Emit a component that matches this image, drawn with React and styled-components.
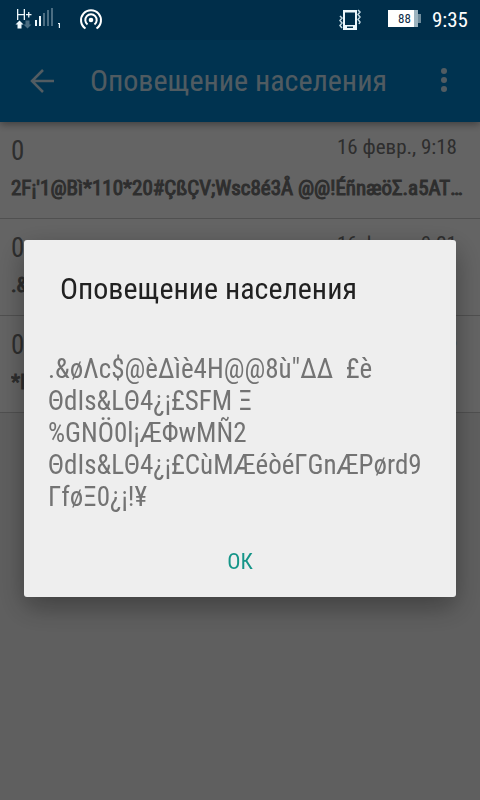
import React from "react";
import styled, { createGlobalStyle } from "styled-components";

const messages = [
  { id: 1, sender: "0", date: "16 февр., 9:18", text: "2F¡'1@Bì*110*20#ÇßÇV;Wsc8é3Å @@!ÉñnæöΣ.a5ATΔΔ £è" },
  { id: 2, sender: "0", date: "16 февр., 9:21", text: ".&øΛc$@èΔìè4H@@8ù\"ΔΔ  £è ΘdΙs&LΘ4¿¡£SFM Ξ %GNÖ0l¡ÆΦwMÑ2" },
  { id: 3, sender: "0", date: "16 февр., 9:25", text: "*ΙΘdΙs&LΘ4¿¡£CùMÆéòéΓGnÆPørd9 ΓføΞ0¿¡!¥ ΘdΙs&LΘ4" },
];

const alertLines = [
  ".&øΛc$@èΔìè4H@@8ù\"ΔΔ  £è",
  "ΘdIs&LΘ4¿¡£SFM Ξ",
  "%GNÖ0l¡ÆΦwMÑ2",
  "ΘdIs&LΘ4¿¡£CùMÆéòéΓGnÆPørd9",
  "ΓføΞ0¿¡!¥",
];

function SignalIcon() {
  return (
    <svg width="46" height="24" viewBox="0 0 46 24" fill="#eef7fb" aria-hidden="true">
      <path d="M1 1h1.300v5h5.400v-5h1.300v11h-1.300v-4.800h-5.400v4.800h-1.300z" />
      <path d="M10 6h5.500v1.300h-5.500zM12.100 4h1.300v5.500h-1.300z" />
      <path d="M3.500 12.500l4 4h-2v4h-4v-4h-2z" />
      <path d="M11.500 20.500l-4-4h2v-4h4v4h2z" fill="#4b6d82" />
      <path d="M19 12h2v6h-2zM23 8h2v10h-2z" />
      <path d="M27 5h2v13h-2zM31 2h2v16h-2zM35 0h2v18h-2z" fill="#4b6d82" />
      <path d="M42 15h2v5h-1.200v-4h-0.800z" />
    </svg>
  );
}

function HotspotIcon() {
  return (
    <svg width="24" height="24" viewBox="0 0 24 24" fill="none" stroke="#fff" strokeWidth="2" aria-hidden="true">
      <circle cx="12" cy="12" r="2.300" fill="#fff" stroke="none" />
      <path d="M8.500 16.500a5.700 5.700 0 1 1 7 0" />
      <path d="M6.500 20.500a10 10 0 1 1 11 0" />
    </svg>
  );
}

function VibrateIcon() {
  return (
    <svg width="24" height="24" viewBox="0 0 24 24" fill="none" aria-hidden="true">
      <path fillRule="evenodd" fill="#eef7fb" d="M5 2h14v20h-14zM7 4.500v12.500h10v-12.500zM9 18.500v1.500h6v-1.500z" />
      <path d="M2 8l2 2-2 2.500 2 2.500-2 2.500 2 2.500M20 2l2 2-2 2.500 2 2.500-2 2.500 2 2.500-1 2" stroke="#c5dae4" strokeWidth="1.500" />
    </svg>
  );
}

function BackIcon() {
  return (
    <svg width="24" height="24" viewBox="0 0 24 24" fill="none" stroke="#fff" strokeWidth="2.500" aria-hidden="true">
      <path d="M13 1L2 12l11 11M2 12H24" />
    </svg>
  );
}

function MoreIcon() {
  return (
    <svg width="6" height="26" viewBox="0 0 6 26" fill="#fff" aria-hidden="true">
      <circle cx="3" cy="3" r="3" />
      <circle cx="3" cy="12" r="3" />
      <circle cx="3" cy="21" r="3" />
    </svg>
  );
}

function StatusBar() {
  return (
    <Status>
      <StatusGroup gap="17px">
        <SignalIcon />
        <HotspotIcon />
      </StatusGroup>
      <StatusGroup gap="11px">
        <VibrateIcon />
        <BatterySlot>
          <BatteryLevel>88</BatteryLevel>
          <BatteryTip />
        </BatterySlot>
        <Clock>9:35</Clock>
      </StatusGroup>
    </Status>
  );
}

function MessageRow({ sender, date, text }) {
  return (
    <Row>
      <RowTop>
        <Sender>{sender}</Sender>
        <DateText>{date}</DateText>
      </RowTop>
      <Preview>{text}</Preview>
    </Row>
  );
}

function App() {
  return (
    <Page>
      <GlobalStyle />
      <StatusBar />
      <AppBar>
        <IconButton type="button" aria-label="Назад">
          <BackIcon />
        </IconButton>
        <BarTitle>Оповещение населения</BarTitle>
        <IconButton type="button" aria-label="Меню">
          <MoreIcon />
        </IconButton>
      </AppBar>
      <List>
        {messages.map((m) => (
          <MessageRow key={m.id} {...m} />
        ))}
      </List>

      <Scrim>
        <Dialog role="dialog" aria-modal="true" aria-labelledby="alert-title">
          <DialogTitle id="alert-title">Оповещение населения</DialogTitle>
          <DialogText>{alertLines.join("\n")}</DialogText>
          <OkButton type="button">ОК</OkButton>
        </Dialog>
      </Scrim>
    </Page>
  );
}

const GlobalStyle = createGlobalStyle`
  * {
    box-sizing: border-box;
  }
  body {
    margin: 0;
    background: #eee;
    font-family: "Roboto Condensed", Roboto, "Liberation Sans", sans-serif;
  }
`;

const Page = styled.div`
  min-height: 100vh;
`;

/* the status bar stays above the scrim */
const Status = styled.header`
  position: relative;
  z-index: 2;
  display: flex;
  align-items: center;
  justify-content: space-between;
  height: 40px;
  padding: 0 12px 0 16px;
  background: #002e4a;
  color: #fff;
`;

const StatusGroup = styled.div`
  display: flex;
  align-items: center;
  gap: ${(props) => props.gap};

  svg {
    overflow: visible;
  }
`;

const BatterySlot = styled.div`
  display: flex;
  align-items: center;
  margin: 0 0 3px 15px;
`;

const BatteryLevel = styled.span`
  width: 30px;
  height: 17px;
  padding-left: 7px;
  border-right: 4px solid #9db4c0;
  background: #fff;
  color: #12304a;
  font-size: 13px;
  line-height: 17px;
  text-align: center;
`;

const BatteryTip = styled.span`
  width: 3px;
  height: 9px;
  background: #6e8b9b;
`;

const Clock = styled.time`
  font-size: 21px;
  line-height: 24px;
`;

const AppBar = styled.nav`
  position: relative;
  display: flex;
  align-items: center;
  height: 82px;
  padding: 0 33px 0 30px;
  background: #0281c8;
  box-shadow: 0 2px 8px rgba(0, 0, 0, 0.4);
`;

const IconButton = styled.button`
  display: flex;
  padding: 0;
  border: 0;
  background: transparent;
  opacity: 0.8;
  cursor: pointer;
`;

const BarTitle = styled.h1`
  flex: 1;
  margin: 0 0 0 36px;
  color: rgba(255, 255, 255, 0.8);
  font-size: 30px;
  font-weight: 400;
  line-height: 36px;
`;

const List = styled.ul`
  margin: 0;
  padding: 0;
  list-style: none;
`;

const Row = styled.li`
  height: 97px;
  padding: 12px 16px 0 11px;
  border-bottom: 1px solid #c8c8c8;
  background: #fafafa;
  color: #737373;
`;

const RowTop = styled.div`
  display: flex;
  justify-content: space-between;
  height: 40px;
  padding-right: 7px;
`;

const Sender = styled.span`
  font-size: 27px;
  line-height: 34px;
`;

const DateText = styled.span`
  font-size: 21px;
  line-height: 26px;
`;

const Preview = styled.p`
  margin: 0;
  overflow: hidden;
  font-size: 21px;
  line-height: 28px;
  text-overflow: ellipsis;
  white-space: nowrap;
  -webkit-text-stroke: 1px;
`;

const Scrim = styled.div`
  position: fixed;
  inset: 0;
  z-index: 1;
  display: flex;
  align-items: center;
  justify-content: center;
  padding: 40px 24px 3px;
  background: rgba(0, 0, 0, 0.6);
`;

const Dialog = styled.section`
  display: flex;
  flex: 1;
  flex-direction: column;
  padding: 31px 24px 18px;
  border-radius: 3px;
  background: #eee;
  box-shadow: 0 10px 28px rgba(0, 0, 0, 0.35);
`;

const DialogTitle = styled.h2`
  margin: 0 12px;
  color: #212121;
  font-size: 30px;
  font-weight: 400;
  line-height: 36px;
`;

const DialogText = styled.p`
  margin: 46px 0 32px;
  color: #737373;
  font-size: 27px;
  line-height: 32px;
  white-space: pre-wrap;
`;

const OkButton = styled.button`
  align-self: center;
  padding: 4px 12px;
  border: 0;
  background: transparent;
  color: #159588;
  font-family: inherit;
  font-size: 22px;
  line-height: 26px;
  cursor: pointer;
`;

export default App;
